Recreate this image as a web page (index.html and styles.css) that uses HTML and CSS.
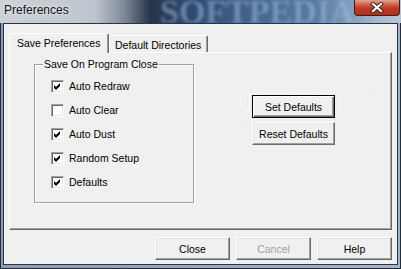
FILE: index.html
```html
<!DOCTYPE html>
<html>
<head>
<meta charset="utf-8">
<title>Preferences</title>
<link rel="stylesheet" href="styles.css">
</head>
<body>
<div class="window">
  <div class="titlebar">
    <span class="title">Preferences</span>
    <span class="title-mark">SOFTPEDIA</span>
    <div class="close-btn">
      <svg width="14" height="11" viewBox="0 0 14 11">
        <path d="M3 2 L11 9 M11 2 L3 9" stroke="#3a2a28" stroke-width="4.2" stroke-linecap="square"/>
        <path d="M3 2 L11 9 M11 2 L3 9" stroke="#ffffff" stroke-width="2.2" stroke-linecap="square"/>
      </svg>
    </div>
  </div>
  <div class="frame">
    <div class="client">
      <div class="tabs">
        <div class="tab tab-active">Save Preferences</div>
        <div class="tab">Default Directories</div>
      </div>
      <div class="pane">
        <fieldset class="group">
          <legend>Save On Program Close</legend>
          <div class="check-row"><span class="check"><svg width="11" height="11" viewBox="0 0 11 11"><polygon points="2,4 4,6 8,2 8,5 4,9 2,7" fill="#000"/></svg></span>Auto Redraw</div>
          <div class="check-row"><span class="check"></span>Auto Clear</div>
          <div class="check-row"><span class="check"><svg width="11" height="11" viewBox="0 0 11 11"><polygon points="2,4 4,6 8,2 8,5 4,9 2,7" fill="#000"/></svg></span>Auto Dust</div>
          <div class="check-row"><span class="check"><svg width="11" height="11" viewBox="0 0 11 11"><polygon points="2,4 4,6 8,2 8,5 4,9 2,7" fill="#000"/></svg></span>Random Setup</div>
          <div class="check-row"><span class="check"><svg width="11" height="11" viewBox="0 0 11 11"><polygon points="2,4 4,6 8,2 8,5 4,9 2,7" fill="#000"/></svg></span>Defaults</div>
        </fieldset>
        <div class="side-buttons">
          <div class="btn btn-default">Set Defaults</div>
          <div class="btn">Reset Defaults</div>
        </div>
      </div>
      <div class="footer">
        <div class="btn btn-wide">Close</div>
        <div class="btn btn-wide btn-disabled">Cancel</div>
        <div class="btn btn-wide">Help</div>
      </div>
      <div class="watermark">SOFTPEDIA<sup>&trade;</sup></div>
      <div class="watermark-url">www.softpedia.com</div>
    </div>
  </div>
</div>
</body>
</html>
```
FILE: styles.css
```css
body {
	margin: 0;
	background: #f0f0f0;
}
.window {
	width: 401px;
	height: 269px;
	display: flex;
	flex-direction: column;
	font-family: "Liberation Sans", Arial, sans-serif;
	font-size: 10.5px;
	color: #000;
}
.titlebar {
	height: 23px;
	flex: none;
	display: flex;
	align-items: flex-start;
	position: relative;
	overflow: hidden;
	background: linear-gradient(to right, #cdd2d9 0px, #bfc5ce 95px, #7d8796 125px, #27344a 150px, #2f4a70 190px, #466890 260px, #5a7ca2 320px, #86a2bf 355px, #a8bccf 380px, #b6c6d6 401px);
}
.title {
	padding: 3px 0 0 4px;
	font-size: 12px;
	color: #101010;
	text-shadow: 0 0 4px #e8ecf0, 0 0 2px #e8ecf0;
	position: relative;
	z-index: 1;
}
.title-mark {
	position: absolute;
	left: 160px;
	top: -7px;
	font-family: "Liberation Serif", serif;
	font-weight: bold;
	font-size: 34px;
	line-height: 38px;
	color: rgba(160, 190, 225, 0.5);
	filter: blur(1.4px);
}
.close-btn {
	margin-left: auto;
	margin-right: 1px;
	width: 46px;
	height: 16px;
	box-sizing: border-box;
	border: 1px solid #4a1a12;
	border-top: none;
	border-radius: 0 0 4px 4px;
	background: linear-gradient(#e4a090 0px, #d26a54 4px, #c03a24 8px, #b02c18 16px);
	display: flex;
	align-items: center;
	justify-content: center;
	position: relative;
	z-index: 1;
}
.frame {
	flex: 1;
	display: flex;
	border: 1px solid #222c3c;
	border-top: none;
	padding: 0 2px 3px 2px;
	background: linear-gradient(to right, #8e9cb2, #a4b4c8);
}
.client {
	flex: 1;
	position: relative;
	display: flex;
	flex-direction: column;
	border: 1px solid #2a3446;
	background: #f0f0f0;
	padding: 9px 5px 0 5px;
}
.tabs {
	height: 19px;
	display: flex;
	align-items: flex-end;
}
.tab {
	height: 17px;
	box-sizing: border-box;
	padding: 3px 6px 0 5px;
	border-top: 1px solid #fff;
	border-left: 1px solid #fff;
	border-right: 1px solid #696969;
	box-shadow: inset -1px 0 0 #a0a0a0;
	border-radius: 2px 2px 0 0;
	background: #f0f0f0;
	white-space: nowrap;
}
.tab-active {
	height: 20px;
	margin-bottom: -1px;
	padding: 3px 6px 0 7px;
	position: relative;
	z-index: 1;
	width: 100px;
}
.pane {
	height: 178px;
	box-sizing: border-box;
	display: flex;
	align-items: flex-start;
	border: 1px solid;
	border-color: #fff #696969 #696969 #fff;
	box-shadow: inset -1px -1px 0 #a0a0a0;
	padding: 5px 0 0 24px;
}
.group {
	margin: 0;
	width: 160px;
	box-sizing: border-box;
	padding: 4px 0 8px 16px;
	border: 1px solid #a0a0a0;
	box-shadow: 1px 1px 0 #fff, inset 1px 1px 0 #fff;
}
.group legend {
	padding: 0 1px;
	margin-left: -8px;
	line-height: 12px;
}
.check-row {
	height: 24px;
	display: flex;
	align-items: center;
	gap: 5px;
}
.check {
	width: 13px;
	height: 13px;
	box-sizing: border-box;
	border: 1px solid;
	border-color: #a0a0a0 #fff #fff #a0a0a0;
	box-shadow: inset 1px 1px 0 #696969, inset -1px -1px 0 #e3e3e3;
	background: #fff;
	display: flex;
}
.check svg {
	display: block;
}
.side-buttons {
	margin-left: 58px;
	padding-top: 37px;
	display: flex;
	flex-direction: column;
	gap: 4px;
}
.btn {
	width: 83px;
	height: 23px;
	box-sizing: border-box;
	border: 1px solid;
	border-color: #fff #696969 #696969 #fff;
	box-shadow: inset -1px -1px 0 #a0a0a0, inset 1px 1px 0 #e3e3e3;
	background: #f0f0f0;
	display: flex;
	align-items: center;
	justify-content: center;
	position: relative;
	z-index: 1;
}
.btn-default {
	border: 1px solid #000;
	box-shadow: inset 1px 1px 0 #fff, inset -1px -1px 0 #696969, inset -2px -2px 0 #a0a0a0;
}
.btn-wide {
	width: 75px;
}
.btn-disabled {
	color: #a0a0a0;
}
.footer {
	margin-top: 7px;
	display: flex;
	justify-content: flex-end;
	gap: 6px;
}
.watermark {
	position: absolute;
	left: 203px;
	top: 62px;
	font-family: "Liberation Serif", serif;
	font-size: 28px;
	letter-spacing: 1px;
	color: #fbfbfb;
	text-shadow: 0 0 1px #c8c8c8;
	opacity: 0.45;
	pointer-events: none;
}
.watermark sup {
	font-size: 9px;
	vertical-align: 16px;
}
.watermark-url {
	position: absolute;
	left: 238px;
	top: 93px;
	font-size: 10px;
	color: #fafafa;
	text-shadow: 0 0 1px #c8c8c8;
	opacity: 0.45;
	pointer-events: none;
}
```
